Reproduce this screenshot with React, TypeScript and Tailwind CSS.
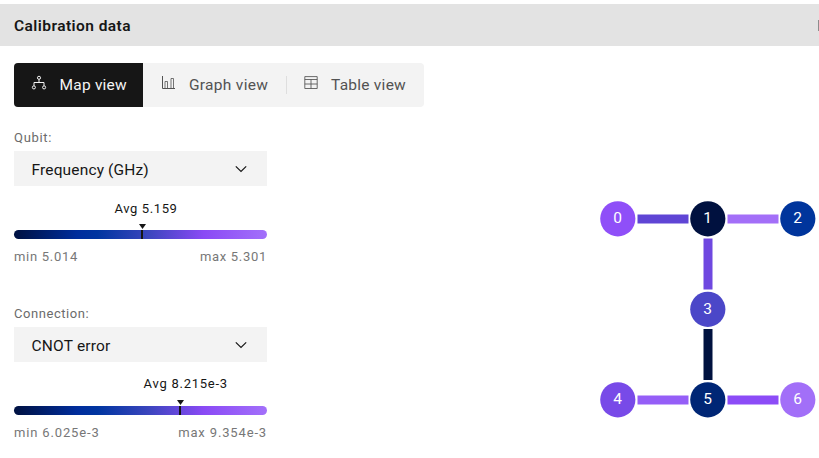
import React from "react";

type TextProps = { className: string; children: React.ReactNode };

const T = ({ className, children }: TextProps) => (
  <span className={`block whitespace-nowrap ${className}`}>{children}</span>
);

const MapIcon = () => (
  <svg className="block h-4 w-4" viewBox="0 0 16 16" fill="none" stroke="currentColor">
    <circle cx="8" cy="2.8" r="1.55" />
    <circle cx="2.9" cy="12.4" r="1.55" />
    <circle cx="13.1" cy="12.4" r="1.55" />
    <path d="M8 4.4V7.5M3 10.8V7.5H13V10.8" />
  </svg>
);

const GraphIcon = () => (
  <svg className="block h-4 w-4" viewBox="0 0 16 16" fill="none" stroke="currentColor">
    <path d="M2.5 1V13.5H15" />
    <path d="M5 13V6.5H7.5V13M11 13V3.5H13.5V13" strokeOpacity=".8" />
  </svg>
);

const TableIcon = () => (
  <svg className="block h-4 w-4" viewBox="0 0 16 16" fill="none" stroke="currentColor" strokeOpacity=".85">
    <path d="M1.8 1.6H14.2V13.5H1.8ZM1.8 4.5H14.2M1.8 9H14.2M8 4.5V13.5" />
  </svg>
);

type MetricProps = {
  label: string;
  labelClass: string;
  metric: string;
  metricClass: string;
  avg: string;
  avgClass: string;
  markerClass: string;
  min: string;
  minClass: string;
  max: string;
  maxClass: string;
};

const Metric = (p: MetricProps) => (
  <section className="w-[253px]">
    <T className={`h-4 text-[13px] leading-4 text-[#6b6b6b] ${p.labelClass}`}>{p.label}</T>
    <button className="mt-[5px] flex h-[35px] w-full items-center justify-between bg-[#f3f3f3] pr-[20.5px] pl-[17.5px] text-[#161616]">
      <T className={`pt-0.5 text-[15.5px] leading-5 ${p.metricClass}`}>{p.metric}</T>
      <svg className="h-3 w-3" viewBox="0 0 12 12" fill="none" stroke="currentColor" strokeWidth="1.2">
        <path d="M.8 3.3L6 8.5L11.2 3.3" />
      </svg>
    </button>
    <div className={`h-4 ${p.avgClass}`}>
      <T className="text-[13px] leading-4 text-[#161616]">{p.avg}</T>
    </div>
    <div className={`flex h-[5px] flex-col items-center ${p.markerClass}`}>
      <svg className="block h-[5px] w-[7px] shrink-0" viewBox="0 0 7 5">
        <path d="M0 0H7L3.5 5Z" fill="#161616" />
      </svg>
    </div>
    <div className="mt-px h-[9px] overflow-hidden rounded-full bg-[linear-gradient(90deg,#001141_0%,#002d9c_25%,#0035a0_33%,#3a45bd_53%,#8a4af5_75%,#a370fa_100%)]">
      <div className={`h-full w-[7px] px-[2.5px] ${p.markerClass}`}>
        <div className="h-full w-0.5 bg-[#161616]" />
      </div>
    </div>
    <div className="mt-[10px] flex h-4 justify-between text-[13px] leading-4 text-[#777]">
      <T className={p.minClass}>{p.min}</T>
      <T className={p.maxClass}>{p.max}</T>
    </div>
  </section>
);

const edges = [
  { x: 637.5, y: 214.5, w: 51, h: 9, c: "#5f45d5" },
  { x: 727.5, y: 214.5, w: 51, h: 9, c: "#a36ff8" },
  { x: 703.5, y: 238.5, w: 9, h: 51, c: "#6f48e0" },
  { x: 703.5, y: 329, w: 9, h: 51, c: "#00123f" },
  { x: 637.5, y: 395.5, w: 51, h: 9, c: "#955ef7" },
  { x: 727.5, y: 395.5, w: 51, h: 9, c: "#8c4cf7" },
];

const nodes = [
  { x: 618, y: 219, c: "#8f4ff8" },
  { x: 708, y: 219, c: "#00113f" },
  { x: 798, y: 219, c: "#00359c" },
  { x: 708, y: 309.5, c: "#4b47c8" },
  { x: 618, y: 400, c: "#784ae8" },
  { x: 708, y: 400, c: "#002675" },
  { x: 798, y: 400, c: "#a26ff8" },
];

const Graph = () => (
  <svg className="mt-[83px] block h-[260px] w-[229px] shrink-0" viewBox="590 190 229 260">
    {edges.map((e, i) => (
      <rect key={i} x={e.x} y={e.y} width={e.w} height={e.h} fill={e.c} />
    ))}
    {nodes.map((n, i) => (
      <g key={i}>
        <circle cx={n.x - 0.2} cy={n.y - 0.2} r="17.6" fill={n.c} />
        <text x={n.x - 0.3} y={n.y + 4.3} textAnchor="middle" fontSize="15.5" fill="white">{i}</text>
      </g>
    ))}
  </svg>
);

export default function App() {
  return (
    <main className="h-[458px] w-[819px] overflow-hidden bg-white pt-1 font-['Roboto',sans-serif]">
      <header className="flex h-[42px] items-center justify-between bg-[#e3e3e3] pl-3.5 text-[#161616]">
        <T className="pt-0.5 text-[15.5px] leading-5 font-semibold tracking-[0.44px]">Calibration data</T>
        <div className="h-[11px] w-px bg-[#8d8d8d]" />
      </header>
      <nav className="mt-[17px] ml-3.5 flex h-11 w-[410px] overflow-hidden rounded bg-[#f3f3f3] text-[15.5px] leading-5 text-[#525252]">
        <div className="flex w-[129px] bg-[#161616] pt-3 pl-[17px] text-[#f4f4f4]">
          <MapIcon />
          <T className="ml-[12.5px] tracking-[0.22px]">Map view</T>
        </div>
        <div className="flex w-[144px] pt-3 pl-[17px]">
          <GraphIcon />
          <T className="ml-[13px] tracking-[0.3px]">Graph view</T>
        </div>
        <div className="mt-[13px] -ml-px h-[18px] w-px bg-[#dedede]" />
        <div className="flex pt-3 pl-4">
          <TableIcon />
          <T className="ml-3 tracking-[0.25px]">Table view</T>
        </div>
      </nav>
      <div className="flex justify-between pl-3.5">
        <div className="mt-[23px] flex flex-col gap-[41px]">
          <Metric
            label="Qubit:" labelClass="tracking-[0.7px]"
            metric="Frequency (GHz)" metricClass="tracking-[0.15px]"
            avg="Avg 5.159" avgClass="mt-[15px] mb-[7px] pl-[100.5px] tracking-[0.6px]"
            markerClass="ml-[124.5px] w-[7px]"
            min="min 5.014" minClass="tracking-[0.7px]"
            max="max 5.301" maxClass="tracking-[0.7px]"
          />
          <Metric
            label="Connection:" labelClass="tracking-[0.55px]"
            metric="CNOT error" metricClass="tracking-[0.2px]"
            avg="Avg 8.215e-3" avgClass="mt-[14px] mb-[8px] pl-[129.5px] tracking-[0.75px]"
            markerClass="ml-[162.5px] w-[7px]"
            min="min 6.025e-3" minClass="tracking-[0.85px]"
            max="max 9.354e-3" maxClass="tracking-[0.85px]"
          />
        </div>
        <Graph />
      </div>
    </main>
  );
}
